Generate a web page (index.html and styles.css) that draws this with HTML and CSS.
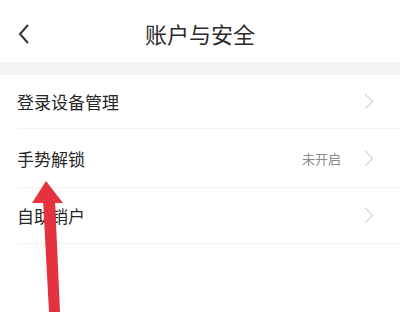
FILE: index.html
```html
<!DOCTYPE html>
<html lang="zh-CN">
<head>
    <meta charset="UTF-8">
    <meta name="viewport" content="width=device-width, initial-scale=1.0">
    <title>账户与安全</title>
    <link rel="stylesheet" href="styles.css">
</head>
<body>

<div class="page">
    <div class="header">
        <svg class="back" width="14" height="22" viewBox="0 0 14 22">
            <polyline points="11,2 3,11 11,20" fill="none" stroke="#333" stroke-width="2"/>
        </svg>
        <h1>账户与安全</h1>
    </div>
    <div class="gap"></div>

    <div class="list">
        <div class="row short">
            <span class="label">登录设备管理</span>
            <span class="right"><span class="arrow-r"></span></span>
        </div>
        <div class="row tall">
            <span class="label">手势解锁</span>
            <span class="right"><span class="status">未开启</span><span class="arrow-r"></span></span>
        </div>
        <div class="row">
            <span class="label">自助销户</span>
            <span class="right"><span class="arrow-r"></span></span>
        </div>
    </div>

    <!-- red pointer drawn over the list -->
    <svg class="pointer" width="400" height="312" viewBox="0 0 400 312">
        <polygon points="46,181 32,203 63,203" fill="#e5323f"/>
        <polygon points="43,200 55,200 60,312 49,312" fill="#e5323f"/>
    </svg>
</div>

</body>
</html>
```

FILE: styles.css
```css
body {
    margin: 0;
    font-family: "Noto Sans CJK SC", "Noto Sans", sans-serif;
    background-color: #fff;
    color: #333;
}
.page {
    position: relative;
    width: 400px;
    height: 312px;
    overflow: hidden;
}
.header {
    height: 62px;
    display: flex;
    align-items: center;
    justify-content: center;
    position: relative;
}
.header h1 {
    margin: 0;
    font-size: 22px;
    font-weight: normal;
    color: #2b2b2b;
    padding-top: 4px;
}
.back {
    position: absolute;
    left: 17px;
    top: 23px;
}
.gap {
    height: 13px;
    background-color: #f4f4f4;
}
.list {
    padding-left: 17px;
}
.row {
    height: 55px;
    display: flex;
    align-items: center;
    justify-content: space-between;
    border-bottom: 1px solid #f3f3f3;
    padding-right: 29px;
}
.row.short {
    height: 53px;
}
.row.tall {
    height: 58px;
}
.label {
    font-size: 17px;
    color: #262626;
}
.right {
    display: flex;
    align-items: center;
}
.status {
    font-size: 13px;
    color: #8a8a8a;
    margin-right: 19px;
}
.arrow-r {
    width: 10px;
    height: 10px;
    border-top: 1px solid #cccccc;
    border-right: 1px solid #cccccc;
    transform: rotate(45deg);
}
.pointer {
    position: absolute;
    left: 0;
    top: 0;
}
```
